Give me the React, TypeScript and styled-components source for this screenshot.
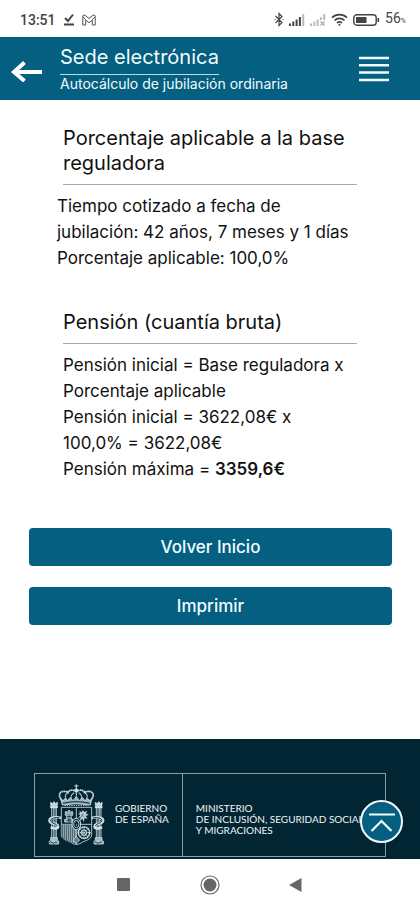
import React from "react";
import styled, { createGlobalStyle } from "styled-components";

const teal = "#045f80";
const navy = "#022534";

const GlobalStyle = createGlobalStyle`
  *, *::before, *::after { box-sizing: border-box; }
  body {
    margin: 0;
    background: #fff;
    color: #111;
    font-family: Inter, "Liberation Sans", sans-serif;
  }
  h1, h2, p { margin: 0; font-weight: 400; }
`;

const Screen = styled.div`
  display: flex;
  flex-direction: column;
  min-height: 100vh;
`;

const StatusBar = styled.div`
  display: flex;
  align-items: center;
  justify-content: space-between;
  height: 37px;
  padding: 2px 14px 0 20px;
  color: #444;
  font-family: Roboto, sans-serif;
`;

const StatusGroup = styled.div<{ $gap: number }>`
  display: flex;
  align-items: center;
  gap: ${(p) => p.$gap}px;
`;

const Clock = styled.time`
  font-size: 14px;
  font-weight: 500;
  line-height: 16px;
`;

const BatteryLevel = styled.span`
  font-size: 14px;
  font-weight: 400;
  line-height: 16px;
  small { font-size: 7px; }
`;

const Header = styled.header`
  display: flex;
  align-items: center;
  min-height: 63px;
  padding: 0 31px 0 10px;
  background: ${teal};
  color: #f2fcff;
`;

const IconButton = styled.button`
  display: flex;
  padding: 0;
  border: 0;
  background: none;
  color: inherit;
  cursor: pointer;
`;

const Titles = styled.div`
  display: flex;
  flex: 1;
  flex-direction: column;
  align-items: flex-start;
  margin-left: 17px;
  padding-bottom: 2px;
`;

const SiteName = styled.h1`
  padding-bottom: 4px;
  border-bottom: 1px solid #b9dbe5;
  font-size: 20px;
  line-height: 26px;
`;

const PageName = styled.p`
  font-size: 14px;
  line-height: 17px;
`;

const Main = styled.main`
  flex: 1;
  padding: 26px 28px 114px 29px;
`;

const Section = styled.section`
  margin: 0 35px 39px 34px;
`;

const SectionTitle = styled.h2`
  padding-bottom: 8px;
  border-bottom: 1px solid #aaa;
  font-size: 20px;
  line-height: 25px;
`;

const Lines = styled.div<{ $outdent?: boolean }>`
  margin: 8px ${(p) => (p.$outdent ? "0 0 -6px" : "6px 0 0")};
  font-size: 17px;
  line-height: 26px;
  strong { font-weight: 600; }
`;

const Actions = styled.div`
  display: flex;
  flex-direction: column;
  gap: 21px;
  margin-top: 46px;
`;

const ActionButton = styled.button`
  height: 38px;
  border: 0;
  border-radius: 4px;
  background: ${teal};
  color: #f2fcff;
  font-family: inherit;
  font-size: 17px;
  font-weight: 500;
  cursor: pointer;
`;

const Footer = styled.footer`
  position: relative;
  padding: 34px 34px 2px;
  background: ${navy};
`;

const Institution = styled.div`
  display: flex;
  height: 84px;
  border: 1px solid #8b9fa6;
  color: #eef5f7;
  font-family: Lato, sans-serif;
`;

const Government = styled.div`
  display: flex;
  align-items: center;
  gap: 10px;
  padding: 0 13px 2px 13px;
  border-right: 1px solid #8b9fa6;
  font-size: 10px;
  line-height: 11px;
  white-space: nowrap;
`;

const Ministry = styled.div`
  flex: 1;
  align-self: center;
  min-width: 0;
  padding: 8px 0 0 13px;
  overflow: hidden;
  font-size: 10px;
  line-height: 11px;
  white-space: nowrap;
`;

const TopButton = styled.button`
  position: absolute;
  right: 17px;
  bottom: 16px;
  display: flex;
  padding: 0;
  border: 0;
  border-radius: 50%;
  background: none;
  cursor: pointer;
`;

const SystemNav = styled.nav`
  display: flex;
  justify-content: center;
  gap: 65px;
  height: 51px;
  padding-right: 1px;
  color: #666;
`;

const SystemButton = styled(IconButton)`
  align-items: center;
  justify-content: center;
  width: 21px;
`;

function StatusIcons() {
  return (
    <>
      <svg width="10" height="15" viewBox="0 0 10 15" fill="none" stroke="#444" strokeWidth="1.2">
        <path d="M1.5 4 8 10.5 5 13.5v-12l3 3L1.5 11M.5 7.5h1M8.5 7.5h1" />
      </svg>
      <svg width="16" height="12" viewBox="0 0 16 12" fill="#444">
        <path d="M0 9.500h2V12H0zM3.300 7.500h2V12h-2zM6.600 5.500h2V12h-2zM9.900 3h2v9h-2z" />
        <path d="M13.200 0h2v12h-2z" fill="#bbb" />
      </svg>
      <svg width="16" height="12" viewBox="0 0 16 12" fill="#bbb">
        <path d="M0 9.500h2V12H0zM3.300 7.500h2V12h-2zM6.600 5.500h2V12h-2zM9.900 3h2v3h-2zM13.200 0h2v6h-2z" />
        <path d="m10.500 7.500 4 4m0-4-4 4" stroke="#aaa" strokeWidth="1.300" />
      </svg>
      <svg width="17" height="13" viewBox="0 0 17 13" fill="none" stroke="#444" strokeWidth="1.700">
        <path d="M1 4.700a10.800 10.800 0 0 1 15 0M3.500 7.500a7 7 0 0 1 10 0M6 10a3.600 3.600 0 0 1 5 0" />
        <circle cx="8.500" cy="11.700" r="1" fill="#444" stroke="none" />
      </svg>
      <svg width="27" height="12" viewBox="0 0 27 12" fill="none" stroke="#444">
        <rect x=".8" y=".8" width="22.400" height="10.400" rx="3" strokeWidth="1.400" />
        <path d="M3 3h10.500v6H3z" fill="#444" stroke="none" />
        <path d="M25.300 4v4" strokeWidth="1.600" />
      </svg>
    </>
  );
}

function Pillar({ x }: { x: number }) {
  return (
    <g transform={`translate(${x} 0)`}>
      <path d="M-10 130v-9l5 4 5-6 5 6 5-4v9zM-10 132h20v6h-20z" fill="#cfdde1" />
      <path d="M-7 139v90M7 139v90M-2 139v90M3 139v90" strokeWidth="2.500" />
      <path d="M-10 227h20v8h-20zM-14 237h28v9h-28z" fill="#9eb3bb" />
      <path d="M-14 242q4-5 8 0t8 0 8 0" stroke={navy} />
    </g>
  );
}

function CoatOfArms() {
  return (
    <svg width="57" height="61" viewBox="81 66 171 183" fill="none" stroke="#d3e0e4" strokeWidth="2.500" role="img" aria-label="Escudo de España">
      <path d="M166 67v14M160 72h12" strokeWidth="3" />
      <circle cx="166" cy="85" r="5" fill="#d3e0e4" />
      <path d="M127 119C103 97 121 81 140 91c8-9 20-8 26-1 6-7 18-8 26 1 19-10 37 6 13 28" strokeWidth="5" strokeDasharray="5 1" />
      <path d="M141 118c-13-14-8-23 3-26M191 118c13-14 8-23-3-26M154 117c-7-12-4-20 6-25M178 117c7-12 4-20-6-25M166 91v28" strokeWidth="3.500" strokeDasharray="4 1" />
      <path d="m119 109 7 8 6-8 7 8 8-10 9 9 10-12 10 12 9-9 8 10 7-8 6 8 7-8-5 20q-42-8-84 0z" fill="#9bb1b9" />
      <path d="M126 124q40-10 80 0" stroke={navy} strokeWidth="3" />
      <path d="M130 130h72" strokeWidth="3" strokeDasharray="4 3" />
      <path d="M121 136h91v82c0 17-25 18-35 27q-10 5-21 0c-10-9-35-10-35-27zM121 187h91M166 136v51" />
      <path d="M133 149h4v5h4v-8h6v8h4v-5h4v11h-4v12h6v8h-26v-8h6v-12h-4z" fill="#7f98a2" />
      <path d="M142 180v-8h5v8M138 164h13" stroke={navy} />
      <path d="M174 146l9 5 2-7 5 6 9-4-4 8 8 4-9 4 6 8-9-2-3 12-4-10-8 8 3-12-7 2 6-9-7-4 7-2z" fill="#c3d3d8" stroke="none" />
      <path d="m181 157 9 8m-2-12-8 14m14-10 9-9 1 7m-26 22 7-3" stroke={navy} strokeWidth="1.500" />
      <path d="M122 188h44v57h-10c-9-9-34-10-34-27z" fill="#405d69" stroke="none" />
      <path d="M127 188v38M133 188v43M139 188v46M145 188v50M151 188v53M157 188v57M163 188v57" strokeWidth="2" />
      <path d="M166 187v60" />
      <circle cx="189" cy="212" r="17" strokeWidth="5" strokeDasharray="5 1" />
      <circle cx="189" cy="212" r="8" strokeWidth="4" strokeDasharray="4 1" />
      <path d="M170 212h38M189 193v38M176 199l26 26m0-26-26 26" strokeWidth="3" strokeDasharray="4 2" />
      <ellipse cx="166" cy="186" rx="13" ry="17" fill={navy} strokeWidth="3" />
      <ellipse cx="166" cy="186" rx="8" ry="11" />
      <path d="M162 179h1m6 0h1m-5 10h2" strokeWidth="4" />
      <path d="m156 235 10-12 10 12-10 8z" fill="#627d88" />
      <Pillar x={99} />
      <Pillar x={233} />
      <path d="M120 168c-15-5-36-1-34 9s24 6 25 16-14 6-22 3M212 168c15-5 36-1 34 9s-24 6-25 16 14 6 22 3" strokeWidth="8" />
      <path d="M116 168c-14-3-27 1-27 8 2 9 20 9 19 16M216 168c14-3 27 1 27 8-2 9-20 9-19 16" stroke={navy} strokeWidth="3" />
    </svg>
  );
}

export default function App() {
  return (
    <>
      <GlobalStyle />
      <Screen>
        <StatusBar>
          <StatusGroup $gap={7}>
            <Clock>13:51</Clock>
            <svg width="12" height="13" viewBox="0 0 12 13" fill="none" stroke="#444" strokeWidth="2">
              <path d="m2 5 3 3 5-6.500M1 11.500h10" />
            </svg>
            <svg width="14" height="12" viewBox="0 0 14 12" fill="none" stroke="#555" strokeWidth="1">
              <path d="M.8 11V2.200Q1.200.3 3 1.200l4 3.300 4-3.300q1.800-.9 2.200 1V11h-2.900V6L7 8.800 3.700 6v5z" />
              <path d="M1 3l2.700 2.500M13 3l-2.700 2.500" />
            </svg>
          </StatusGroup>
          <StatusGroup $gap={5}>
            <StatusIcons />
            <BatteryLevel>56<small>%</small></BatteryLevel>
          </StatusGroup>
        </StatusBar>

        <Header>
          <IconButton aria-label="Volver">
            <svg width="33" height="26" viewBox="0 0 33 26" fill="none" stroke="#fff">
              <path d="M4 16h28" strokeWidth="4" />
              <path d="M14.500 6.500 4 16l10.500 9" strokeWidth="4" />
            </svg>
          </IconButton>
          <Titles>
            <SiteName>Sede electrónica</SiteName>
            <PageName>Autocálculo de jubilación ordinaria</PageName>
          </Titles>
          <IconButton aria-label="Menú">
            <svg width="30" height="26" viewBox="0 0 30 26" stroke="#f2fcff" strokeWidth="2.500">
              <path d="M0 2h30M0 9.300h30M0 16.600h30M0 24h30" />
            </svg>
          </IconButton>
        </Header>

        <Main>
          <Section>
            <SectionTitle>Porcentaje aplicable a la base reguladora</SectionTitle>
            <Lines $outdent>
              <p>Tiempo cotizado a fecha de jubilación: 42 años, 7 meses y 1 días</p>
              <p>Porcentaje aplicable: 100,0%</p>
            </Lines>
          </Section>
          <Section>
            <SectionTitle>Pensión (cuantía bruta)</SectionTitle>
            <Lines>
              <p>Pensión inicial = Base reguladora x Porcentaje aplicable</p>
              <p>Pensión inicial = 3622,08€ x 100,0% = 3622,08€</p>
              <p>Pensión máxima = <strong>3359,6€</strong></p>
            </Lines>
          </Section>
          <Actions>
            <ActionButton>Volver Inicio</ActionButton>
            <ActionButton>Imprimir</ActionButton>
          </Actions>
        </Main>

        <Footer>
          <Institution>
            <Government>
              <CoatOfArms />
              <span>GOBIERNO<br />DE ESPAÑA</span>
            </Government>
            <Ministry>
              MINISTERIO<br />DE INCLUSIÓN, SEGURIDAD SOCIAL<br />Y MIGRACIONES
            </Ministry>
          </Institution>
          <TopButton aria-label="Subir al inicio de la página">
            <svg width="43" height="43" viewBox="0 0 43 43" fill="none" stroke="#f4fbfd">
              <circle cx="21.500" cy="21.500" r="20.500" fill={teal} strokeWidth="2" />
              <path d="M9 14.500h26M11.500 31 21.500 21l10 10" strokeWidth="2.200" />
            </svg>
          </TopButton>
        </Footer>

        <SystemNav aria-label="Sistema">
          <SystemButton aria-label="Recientes">
            <svg width="13" height="13" viewBox="0 0 13 13" fill="currentColor"><rect width="13" height="13" rx="1" /></svg>
          </SystemButton>
          <SystemButton aria-label="Inicio">
            <svg width="20" height="20" viewBox="0 0 20 20">
              <circle cx="10" cy="10" r="9" fill="none" stroke="currentColor" strokeWidth="1.200" />
              <circle cx="10" cy="10" r="6.500" fill="currentColor" />
            </svg>
          </SystemButton>
          <SystemButton aria-label="Atrás">
            <svg width="13" height="14" viewBox="0 0 13 14" fill="currentColor"><path d="M0 7 12.500 0v14z" /></svg>
          </SystemButton>
        </SystemNav>
      </Screen>
    </>
  );
}
